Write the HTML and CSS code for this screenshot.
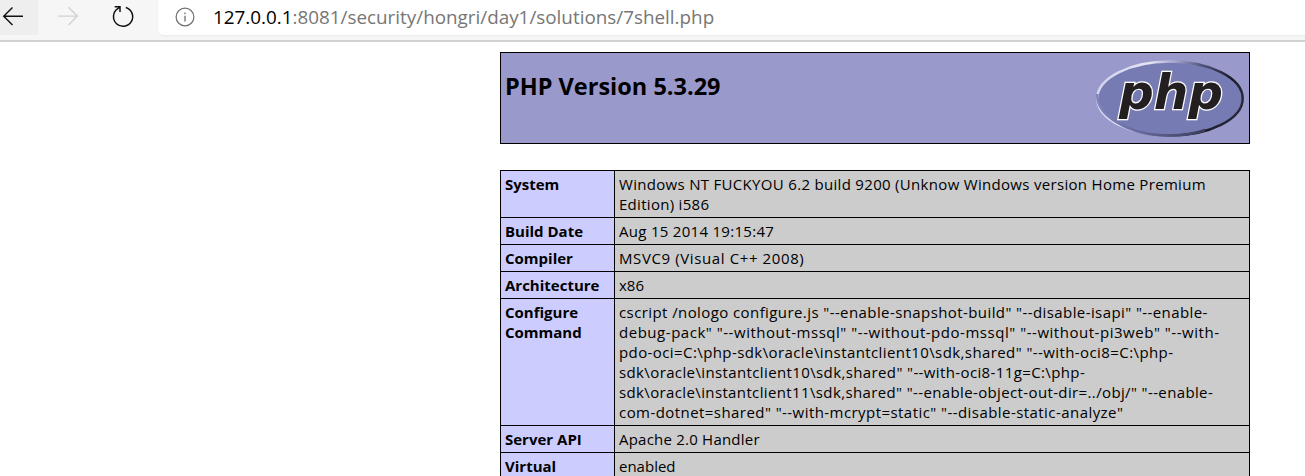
FILE: index.html
```
<!DOCTYPE html>
<html lang="en">
<head>
<meta charset="utf-8">
<title>phpinfo()</title>
<link rel="stylesheet" href="styles.css">
</head>
<body>
<header class="toolbar">
  <div class="nav">
    <span class="nav-btn back"><svg width="38" height="35" viewBox="0 0 38 35"><path d="M23 16.3H4M12.5 7.5L3.7 16.3l8.8 8.8" fill="none" stroke="#111" stroke-width="1.4"/></svg></span>
    <span class="nav-btn"><svg width="60" height="35" viewBox="38 0 60 35"><path d="M58 16.1h19M68.500 7.300l8.800 8.800-8.800 8.800" fill="none" stroke="#d2d2d2" stroke-width="1.400"/></svg></span>
    <span class="nav-btn"><svg width="60" height="35" viewBox="98 0 60 35"><path d="M125.800 7.500a9.600 9.600 0 1 1-8 1.200L119.800 7M114.700 6.800h5.300v5.200" fill="none" stroke="#111" stroke-width="1.500"/></svg></span>
  </div>
  <div class="address">
    <svg width="20" height="20" viewBox="0 0 20 20"><circle cx="10" cy="10" r="8.900" fill="none" stroke="#707070" stroke-width="1.200"/><path d="M10 8.700v5.800M10 5.500v1.700" stroke="#707070" stroke-width="1.300"/></svg>
    <span class="url"><span class="host">127.0.0.1</span>:8081/security/hongri/day1/solutions/7shell.php</span>
  </div>
</header>
<main class="page">
  <section class="banner">
    <h1>PHP Version 5.3.29</h1>
    <svg class="logo" width="150" height="78" viewBox="0 0 150 78">
      <defs>
        <linearGradient id="rim" gradientUnits="userSpaceOnUse" x1="20" y1="0" x2="135" y2="60">
          <stop offset="0" stop-color="#d5d6ee"/><stop offset=".25" stop-color="#e4e4f4"/><stop offset=".42" stop-color="#a3a5d0"/><stop offset=".6" stop-color="#55587f"/><stop offset=".85" stop-color="#1c1c28"/><stop offset="1" stop-color="#262636"/>
        </linearGradient>
        <linearGradient id="shade" gradientUnits="userSpaceOnUse" x1="0" y1="0" x2="110" y2="0">
          <stop offset="0" stop-color="#8286bc"/><stop offset=".3" stop-color="#6c70a6"/><stop offset="1" stop-color="#3b3d5c"/>
        </linearGradient>
      </defs>
      <ellipse cx="75" cy="38.500" rx="72.700" ry="37" fill="#777bb3" stroke="url(#rim)" stroke-width="2.400"/>
      <path d="M2.300 34C1 55 33 75.500 75 75.500c13 0 25-2 35-5.500" fill="none" stroke="url(#shade)" stroke-width="2.600"/>
      <text class="mark" x="24" y="48.500" textLength="104" lengthAdjust="spacingAndGlyphs">php</text>
    </svg>
  </section>
  <table class="info">
    <tr><th>System</th><td><span class="l1">Windows NT FUCKYOU 6.2 build 9200 (Unknow Windows version Home Premium</span><br><span class="l2">Edition) i586</span></td></tr>
    <tr><th>Build Date</th><td><span class="l3">Aug 15 2014 19:15:47</span></td></tr>
    <tr><th>Compiler</th><td><span class="l4">MSVC9 (Visual C++ 2008)</span></td></tr>
    <tr><th>Architecture</th><td>x86</td></tr>
    <tr><th>Configure<br>Command</th><td><span class="c1">cscript /nologo configure.js "--enable-snapshot-build" "--disable-isapi" "--enable-</span><br><span class="c2">debug-pack" "--without-mssql" "--without-pdo-mssql" "--without-pi3web" "--with-</span><br><span class="c3">pdo-oci=C:\php-sdk\oracle\instantclient10\sdk,shared" "--with-oci8=C:\php-</span><br><span class="c4">sdk\oracle\instantclient10\sdk,shared" "--with-oci8-11g=C:\php-</span><br><span class="c5">sdk\oracle\instantclient11\sdk,shared" "--enable-object-out-dir=../obj/" "--enable-</span><br><span class="c6">com-dotnet=shared" "--with-mcrypt=static" "--disable-static-analyze"</span></td></tr>
    <tr><th>Server API</th><td><span class="l5">Apache 2.0 Handler</span></td></tr>
    <tr><th>Virtual</th><td>enabled</td></tr>
  </table>
</main>
</body>
</html>
```
FILE: styles.css
```
* { box-sizing: border-box; }
html, body { margin: 0; height: 476px; overflow: hidden; background: #fff; }
body { font-family: "Open Sans", "Noto Sans", sans-serif; color: #000; }
svg { display: block; flex: none; }
.toolbar { display: flex; align-items: flex-start; height: 42px; background: #f6f6f6; border-bottom: 2px solid #d1d1d1; }
.nav { display: flex; width: 158px; flex: none; }
.nav-btn { height: 35px; }
.back { background: #eee; }
.address { display: flex; align-items: center; flex: 1; height: 35px; padding: 0 0 2px 17px; background: #fff; border-bottom-left-radius: 5px; box-shadow: 0 1px 2px #e8e8e8; }
.url { margin-left: 18px; font-size: 18.85px; line-height: 28px; color: #767676; white-space: nowrap; }
.host { color: #000; }
.page { width: 750px; margin: 10px 0 0 500px; }
.banner { display: flex; justify-content: space-between; height: 92px; padding: 7px 4px 0; border: 1px solid #000; background: #9999cc; }
.banner h1 { margin: 10px 0 0; font-size: 23.5px; line-height: 32px; font-weight: 700; }
.logo { overflow: visible; }
.mark { font: italic 700 48px "DejaVu Sans", sans-serif; fill: #231f20; stroke: #fff; stroke-width: 2.4px; paint-order: stroke; stroke-linejoin: miter; }
.info { width: 750px; margin-top: 26px; border-collapse: collapse; table-layout: fixed; font-size: 15px; line-height: 20px; }
.info th, .info td { height: 27px; padding: 3px 4px; border: 1px solid #000; text-align: left; vertical-align: top; white-space: nowrap; }
.info th { width: 114px; background: #ccccff; font-weight: 700; }
.info td { background: #cccccc; }
.l1 { letter-spacing: .31px; }
.l2, .l3 { letter-spacing: .29px; }
.l4 { letter-spacing: .61px; }
.l5 { letter-spacing: .22px; }
.c1 { letter-spacing: .41px; }
.c2 { letter-spacing: .53px; }
.c3 { letter-spacing: .41px; }
.c4 { letter-spacing: .38px; }
.c5 { letter-spacing: .37px; }
.c6 { letter-spacing: .44px; }
```
